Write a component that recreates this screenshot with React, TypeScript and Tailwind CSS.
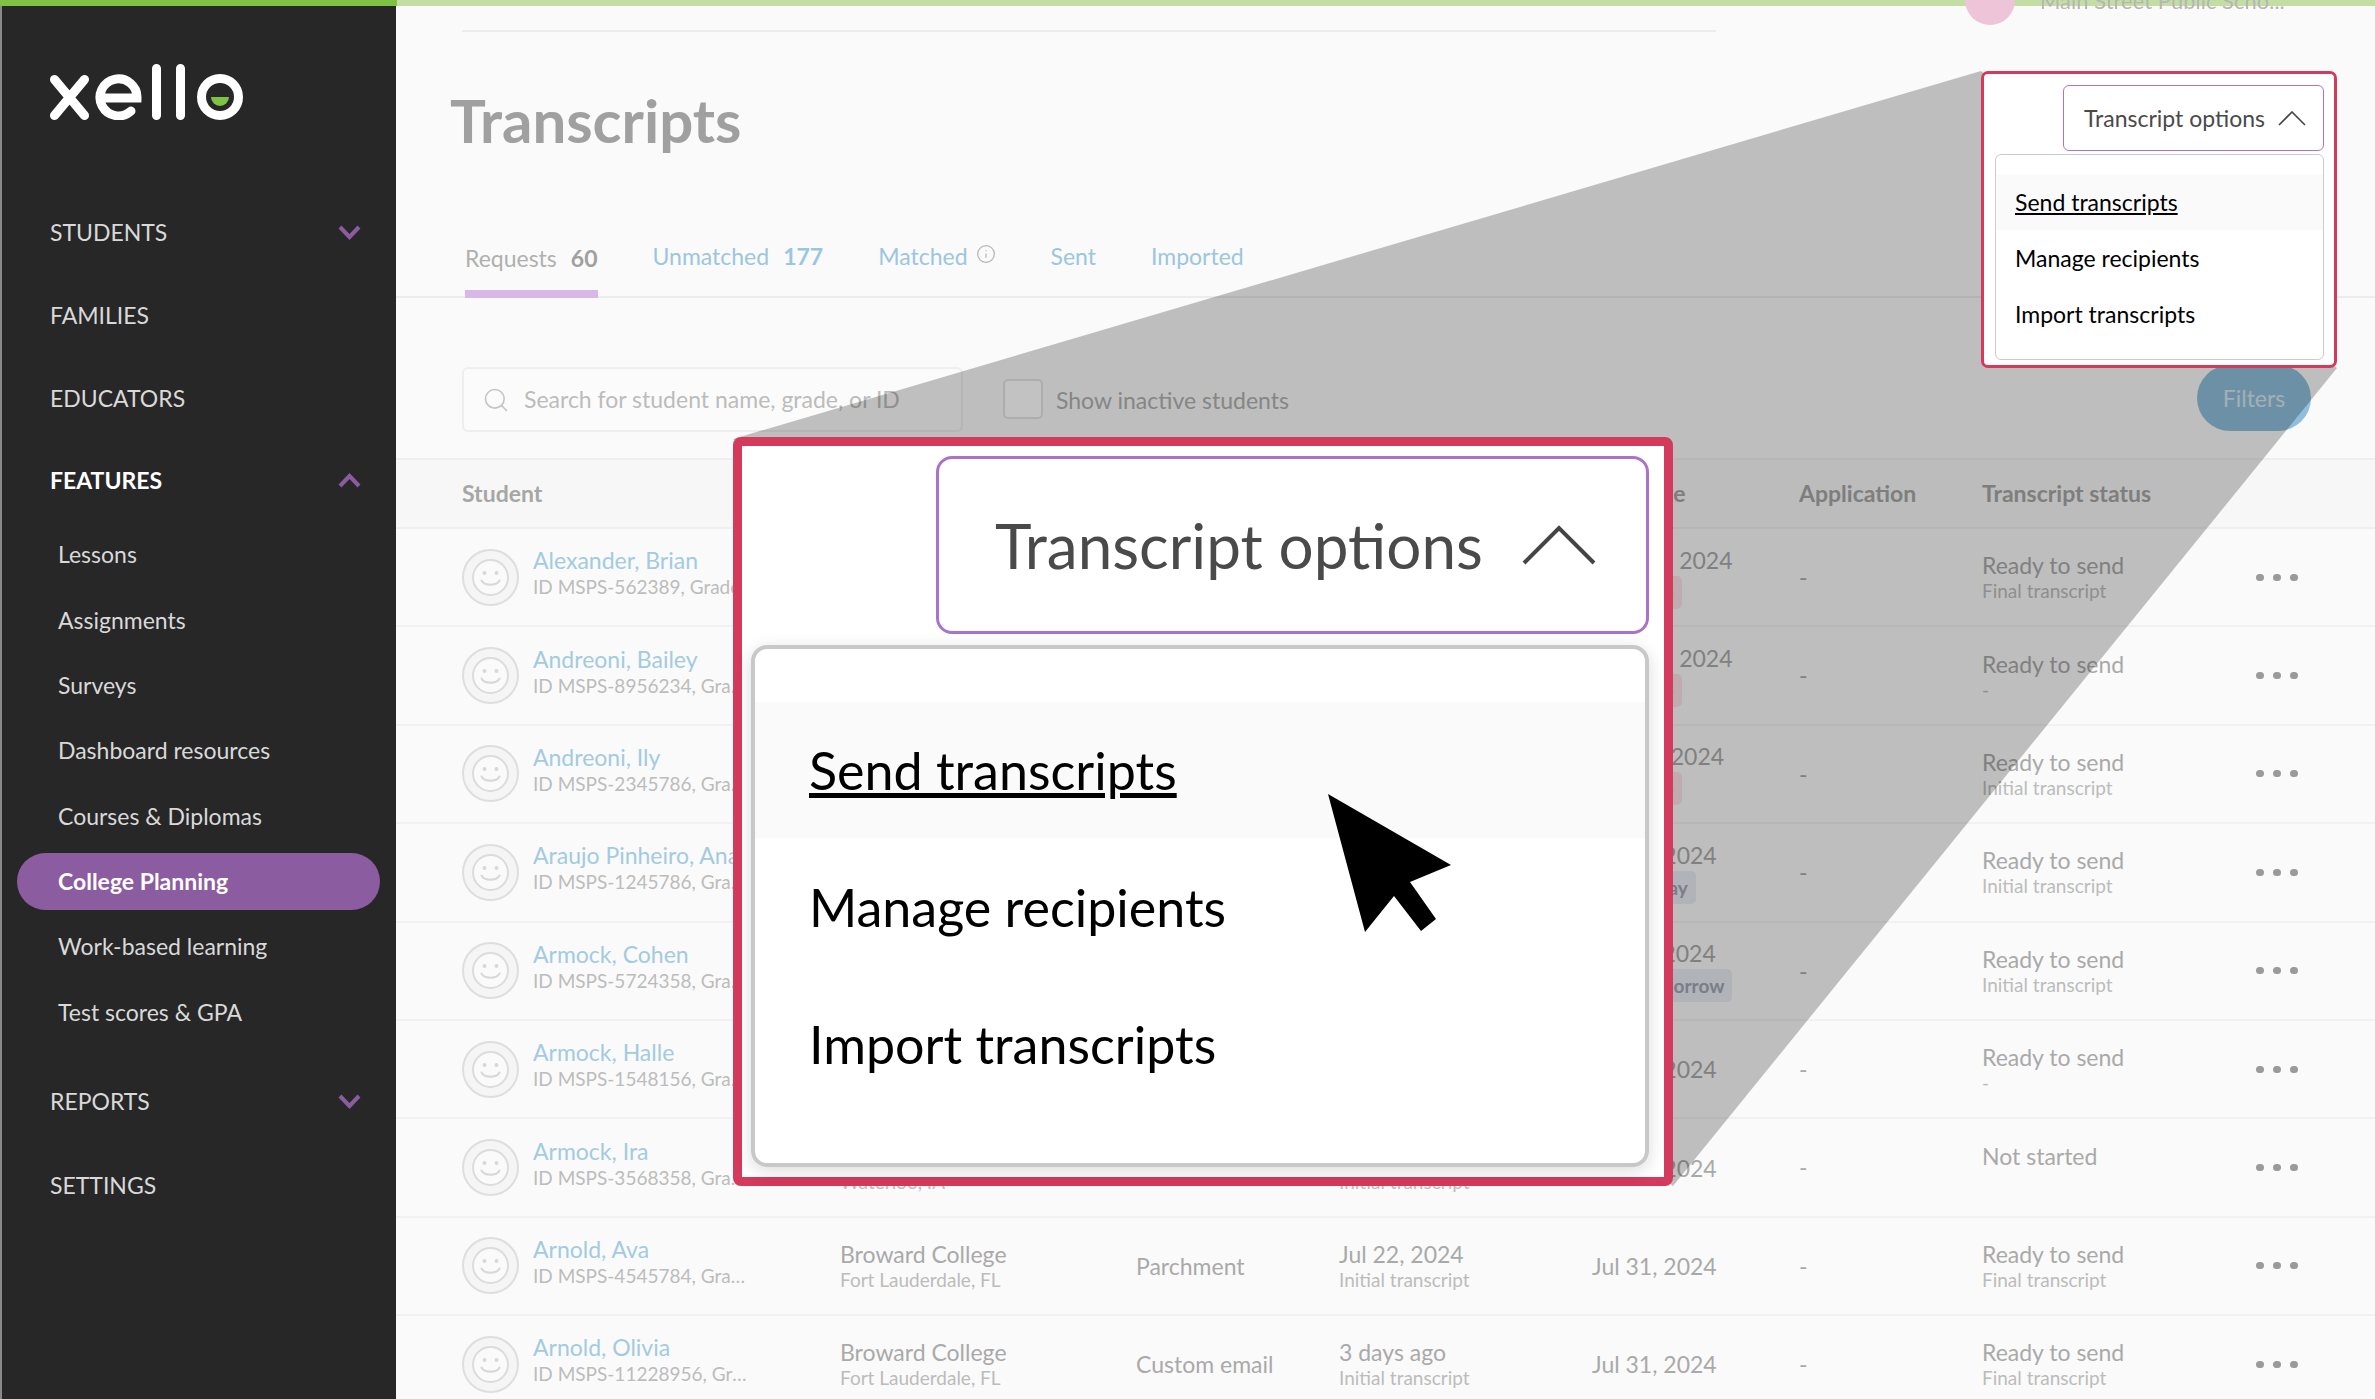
import React from 'react';
import { Info, Search } from 'lucide-react';

const FEATURE_LINKS = [
  'Lessons',
  'Assignments',
  'Surveys',
  'Dashboard resources',
  'Courses & Diplomas',
  'College Planning',
  'Work-based learning',
  'Test scores & GPA',
];

type Row = {
  name: string;
  id: string;
  school: string;
  city: string;
  method: string;
  requested: string;
  requestedSub: string;
  due: string;
  badge?: 'Overdue' | 'Due today' | 'Due tomorrow';
  status: string;
  statusSub: string;
};

const ROWS: Row[] = [
  { name: 'Alexander, Brian', id: 'ID MSPS-562389, Grade 12', school: 'Broward College', city: 'Fort Lauderdale, FL', method: 'Parchment', requested: 'Jul 22, 2024', requestedSub: 'Final transcript', due: 'May 28, 2024', badge: 'Overdue', status: 'Ready to send', statusSub: 'Final transcript' },
  { name: 'Andreoni, Bailey', id: 'ID MSPS-8956234, Grade 12', school: 'Broward College', city: 'Fort Lauderdale, FL', method: 'Parchment', requested: 'Jul 22, 2024', requestedSub: 'Final transcript', due: 'May 28, 2024', badge: 'Overdue', status: 'Ready to send', statusSub: '-' },
  { name: 'Andreoni, Ily', id: 'ID MSPS-2345786, Grade 12', school: 'Broward College', city: 'Fort Lauderdale, FL', method: 'Parchment', requested: 'Jul 22, 2024', requestedSub: 'Initial transcript', due: 'Jun 24, 2024', badge: 'Overdue', status: 'Ready to send', statusSub: 'Initial transcript' },
  { name: 'Araujo Pinheiro, Ana', id: 'ID MSPS-1245786, Grade 12', school: 'Broward College', city: 'Fort Lauderdale, FL', method: 'Parchment', requested: 'Jul 22, 2024', requestedSub: 'Initial transcript', due: 'Jul 31, 2024', badge: 'Due today', status: 'Ready to send', statusSub: 'Initial transcript' },
  { name: 'Armock, Cohen', id: 'ID MSPS-5724358, Grade 12', school: 'Broward College', city: 'Fort Lauderdale, FL', method: 'Parchment', requested: 'Jul 22, 2024', requestedSub: 'Initial transcript', due: 'Aug 1, 2024', badge: 'Due tomorrow', status: 'Ready to send', statusSub: 'Initial transcript' },
  { name: 'Armock, Halle', id: 'ID MSPS-1548156, Grade 12', school: 'Broward College', city: 'Fort Lauderdale, FL', method: 'Parchment', requested: 'Jul 22, 2024', requestedSub: 'Initial transcript', due: 'Jul 31, 2024', status: 'Ready to send', statusSub: '-' },
  { name: 'Armock, Ira', id: 'ID MSPS-3568358, Grade 12', school: 'Wartburg College', city: 'Waterloo, IA', method: 'Parchment', requested: 'Jul 22, 2024', requestedSub: 'Initial transcript', due: 'Jul 31, 2024', status: 'Not started', statusSub: '' },
  { name: 'Arnold, Ava', id: 'ID MSPS-4545784, Grade 12', school: 'Broward College', city: 'Fort Lauderdale, FL', method: 'Parchment', requested: 'Jul 22, 2024', requestedSub: 'Initial transcript', due: 'Jul 31, 2024', status: 'Ready to send', statusSub: 'Final transcript' },
  { name: 'Arnold, Olivia', id: 'ID MSPS-11228956, Grade 12', school: 'Broward College', city: 'Fort Lauderdale, FL', method: 'Custom email', requested: '3 days ago', requestedSub: 'Initial transcript', due: 'Jul 31, 2024', status: 'Ready to send', statusSub: 'Final transcript' },
];

const GRID = 'grid grid-cols-[378px_296px_203px_253px_207px_183px_274px_1fr] pl-[66px]';

const XelloLogo = () => (
  <svg width="194" height="56" viewBox="0 0 194 56" fill="none" role="img" aria-label="xello">
    <g stroke="#fff" strokeWidth="9" strokeLinecap="round">
      <path d="M4.5 15.5 34.5 51.5M34.5 15.5 4.5 51.5" />
      <path d="M51 34H87A18.5 18.5 0 1 0 81 47" />
      <path d="M106.5 4.5V51.5M130.5 4.5V51.5" />
      <circle cx="170" cy="33" r="18.5" />
    </g>
    <path d="M161 33H179A9 9 0 0 1 161 33Z" fill="#7dc242" />
  </svg>
);

const NavChevron = ({ up }: { up?: boolean }) => (
  <svg width="23" height="15" viewBox="0 0 23 15" fill="none" className="ml-auto mr-[35px]">
    <path d={up ? 'M2 13 11.5 3 21 13' : 'M2 2 11.5 12 21 2'} stroke="#8b5ca0" strokeWidth="4" />
  </svg>
);

const Avatar = () => (
  <svg width="57" height="57" viewBox="0 0 57 57" fill="none" className="shrink-0">
    <circle cx="28.5" cy="28.5" r="27.5" fill="#f5f5f5" stroke="#dedede" strokeWidth="2" />
    <circle cx="28.5" cy="28.5" r="17.5" fill="#fafafa" stroke="#dcdcdc" strokeWidth="2" />
    <circle cx="22.5" cy="24" r="2" fill="#d8d8d8" />
    <circle cx="34.5" cy="24" r="2" fill="#d8d8d8" />
    <path d="M19.5 31.5C22 37 35 37 37.5 31.5" stroke="#d8d8d8" strokeWidth="2" strokeLinecap="round" />
  </svg>
);

const Sidebar = () => (
  <aside className="w-[396px] shrink-0 bg-[#272727] border-l-2 border-[#8a8a8a] text-[#d9d9d9]">
    <div className="pl-[48px] pt-[58px] h-[184.5px]">
      <XelloLogo />
    </div>
    <nav className="text-[23px]">
      <div className="h-[83px] pl-[48px] flex items-center">STUDENTS<NavChevron /></div>
      <div className="h-[83px] pl-[48px] flex items-center">FAMILIES</div>
      <div className="h-[83px] pl-[48px] flex items-center">EDUCATORS</div>
      <div className="h-[78px] pt-[3px] pl-[48px] flex items-center font-bold text-white">FEATURES<NavChevron up /></div>
      {FEATURE_LINKS.map((link) => (
        <div
          key={link}
          className={`ml-[15px] w-[363px] my-[8.4px] h-[57px] pl-[41px] flex items-center rounded-full ${
            link === 'College Planning' ? 'bg-[#8b5ca0] font-bold text-white' : ''
          }`}
        >
          {link}
        </div>
      ))}
      <div className="mt-[19px] h-[84px] pl-[48px] flex items-center">REPORTS<NavChevron /></div>
      <div className="h-[84px] pl-[48px] flex items-center">SETTINGS</div>
    </nav>
  </aside>
);

const TableRow = ({ row }: { row: Row }) => (
  <div className={`${GRID} h-[98.4px] items-center border-b-2 border-[#f1f1f1] text-[23px] text-[#a9a9a9]`}>
    <div className="flex items-center gap-[14px]">
      <Avatar />
      <div className="-mt-[10px] w-[222px]">
        <div className="text-[#a3cbe0] leading-[30px]">{row.name}</div>
        <div className="text-[19px] text-[#bcbcbc] leading-[24px] truncate">{row.id}</div>
      </div>
    </div>
    <div>
      <div className="leading-[28px]">{row.school}</div>
      <div className="text-[19px] text-[#bcbcbc] leading-[24px]">{row.city}</div>
    </div>
    <div>{row.method}</div>
    <div>
      <div className="leading-[28px]">{row.requested}</div>
      <div className="text-[19px] text-[#bcbcbc] leading-[24px]">{row.requestedSub}</div>
    </div>
    <div>
      <div className="leading-[28px]">{row.due}</div>
      {row.badge && (
        <span
          className={`inline-block mt-[1px] px-[8px] rounded-[5px] h-[33px] text-[19px] leading-[33px] font-bold ${
            row.badge === 'Overdue' ? 'bg-[#fbe3e7] text-[#d8a0ac]' : 'bg-[#e8ebf2] text-[#a0a6b4]'
          }`}
        >
          {row.badge}
        </span>
      )}
    </div>
    <div>-</div>
    <div>
      <div className="leading-[28px]">{row.status}</div>
      <div className="text-[19px] text-[#bcbcbc] leading-[24px] h-[24px]">{row.statusSub}</div>
    </div>
    <div className="flex gap-[9px]">
      <span className="w-[8px] h-[7px] rounded-full bg-[#9a9a9a]" />
      <span className="w-[8px] h-[7px] rounded-full bg-[#9a9a9a]" />
      <span className="w-[8px] h-[7px] rounded-full bg-[#9a9a9a]" />
    </div>
  </div>
);

const MainContent = () => (
  <main className="relative flex-1 min-w-0 blur-[0.7px] bg-[#fafafa]">
    <div className="absolute left-[1569px] -top-[43px] w-[50px] h-[50px] -mt-[-12px] rounded-full bg-[#eec5d8]" />
    <div className="absolute left-[1644px] -top-[18px] text-[22px] leading-[26px] text-[#b5b5b5] whitespace-nowrap">Main Street Public Scho...</div>

    <div className="ml-[66px] w-[1254px] h-[26px] border-b-2 border-[#ececec]" />
    <h1 className="ml-[54px] mt-[58px] h-[60px] text-[60px] leading-[60px] font-bold text-[#a0a0a0]">Transcripts</h1>

    <div className="h-[148px] flex items-end pl-[69px] gap-[55px] border-b-2 border-[#ececec] text-[23px]">
      <div className="h-[57px] border-b-[8px] border-[#d8b8e6] -mb-[2px] text-[#b0b0b0]">
        Requests<span className="ml-[14px] font-bold text-[#a0a0a0]">60</span>
      </div>
      <div className="h-[57px] text-[#9cc6de]">
        Unmatched<span className="ml-[14px] font-bold">177</span>
      </div>
      <div className="h-[57px] text-[#9cc6de] flex gap-[8px] items-start">
        Matched<Info size={20} strokeWidth={1.5} className="mt-[5px] text-[#b5b5b5]" />
      </div>
      <div className="h-[57px] text-[#9cc6de]">Sent</div>
      <div className="h-[57px] text-[#9cc6de]">Imported</div>
    </div>

    <div className="h-[160px] pl-[66px] pt-[69px] flex items-start text-[23px] text-[#bcbcbc]">
      <div className="w-[501px] h-[65px] border-2 border-[#eeeeee] rounded-[6px] flex items-center pl-[18px] gap-[14px] bg-[#fbfbfb]">
        <Search size={28} strokeWidth={1.4} className="text-[#c4c4c4]" />
        <span className="whitespace-nowrap">Search for student name, grade, or ID</span>
      </div>
      <div className="ml-[40px] mt-[12px] w-[40px] h-[40px] border-2 border-[#e4e4e4] rounded-[5px] bg-white" />
      <div className="ml-[13px] mt-[16px] text-[#b0b0b0]">Show inactive students</div>
      <div className="ml-auto mr-[64px] -mt-[2px] w-[114px] h-[66px] rounded-full bg-[#8fbfdb] text-[#d8e6ee] flex items-center justify-center">Filters</div>
    </div>

    <div className={`${GRID} h-[71px] items-center border-y-2 border-[#efefef] bg-[#f7f7f7] text-[23px] font-bold text-[#a6a6a6]`}>
      <div>Student</div>
      <div>Institution</div>
      <div>Method</div>
      <div>Requested</div>
      <div>Due date</div>
      <div>Application</div>
      <div>Transcript status</div>
    </div>
    {ROWS.map((row) => (
      <TableRow key={row.name} row={row} />
    ))}
  </main>
);

const App: React.FC = () => {
  return (
    <div className="relative w-[2375px] h-[1399px] overflow-hidden flex flex-col bg-[#fafafa] font-['Lato',sans-serif]">
      <div className="h-[6px] shrink-0 flex">
        <div className="w-[397px] bg-[#7dc242]" />
        <div className="flex-1 bg-[#c3dea3]" />
      </div>
      <div className="flex-1 min-h-0 flex">
        <Sidebar />
        <MainContent />
      </div>

      {/* zoom wedge between the two callouts */}
      <svg className="absolute inset-0 pointer-events-none" width="2375" height="1399" viewBox="0 0 2375 1399">
        <polygon points="1981,71 2337,368 1673,1186 733,439" fill="#000" fillOpacity="0.24" />
      </svg>

      {/* small callout */}
      <div className="absolute left-[1981px] top-[71px] w-[356px] h-[297px] border-[3px] border-[#d33a5c] rounded-[7px] bg-white pt-[11px] pl-[11px] pr-[10px] flex flex-col items-end">
        <div className="w-[261px] h-[66px] shrink-0 border border-[#b070d0] rounded-[6px] flex items-center pl-[20px] text-[23px] text-[#4a4a4a]">
          Transcript options
          <svg width="28" height="15" viewBox="0 0 28 15" fill="none" className="ml-[13px]">
            <path d="M1 14 14 1 27 14" stroke="#444" strokeWidth="1.6" />
          </svg>
        </div>
        <div className="mt-[3px] w-full h-[206px] shrink-0 border border-[#cccccc] rounded-[6px] pt-[20px] text-[23px] text-black">
          <div className="h-[55px] pl-[19px] flex items-center bg-[#fafafa] underline">Send transcripts</div>
          <div className="h-[56px] pl-[19px] flex items-center">Manage recipients</div>
          <div className="h-[56px] pl-[19px] flex items-center">Import transcripts</div>
        </div>
      </div>

      {/* large callout */}
      <div className="absolute left-[733px] top-[437px] w-[940px] h-[749px] border-[9px] border-[#d33a5c] rounded-[8px] bg-white pt-[10px] pl-[9px] pr-[15px] flex flex-col items-end">
        <div className="w-[713px] h-[178px] shrink-0 border-[3px] border-[#ab72cc] rounded-[16px] flex items-center pl-[56px] text-[62px] text-[#4a4a4a]">
          Transcript options
          <svg width="74" height="40" viewBox="0 0 74 40" fill="none" className="ml-[39px]">
            <path d="M2 38 37 3 72 38" stroke="#444" strokeWidth="4" />
          </svg>
        </div>
        <div className="mt-[11px] w-full h-[522px] shrink-0 border-[4px] border-[#c8c8c8] rounded-[16px] pt-[53px] text-[52px] text-black shadow-[0_4px_18px_rgba(0,0,0,0.14)]">
          <div className="h-[136px] pl-[54px] flex items-center bg-[#fafafa] underline">Send transcripts</div>
          <div className="h-[137px] pl-[54px] flex items-center">Manage recipients</div>
          <div className="h-[137px] pl-[54px] flex items-center">Import transcripts</div>
        </div>
        <svg className="absolute left-[586px] top-[348px]" width="123" height="138" viewBox="0 0 123 138" role="img" aria-label="cursor">
          <polygon points="0,0 123,71 82,88 108,125 93,137 66,102 37,138" fill="#000" />
        </svg>
      </div>
    </div>
  );
};

export default App;
